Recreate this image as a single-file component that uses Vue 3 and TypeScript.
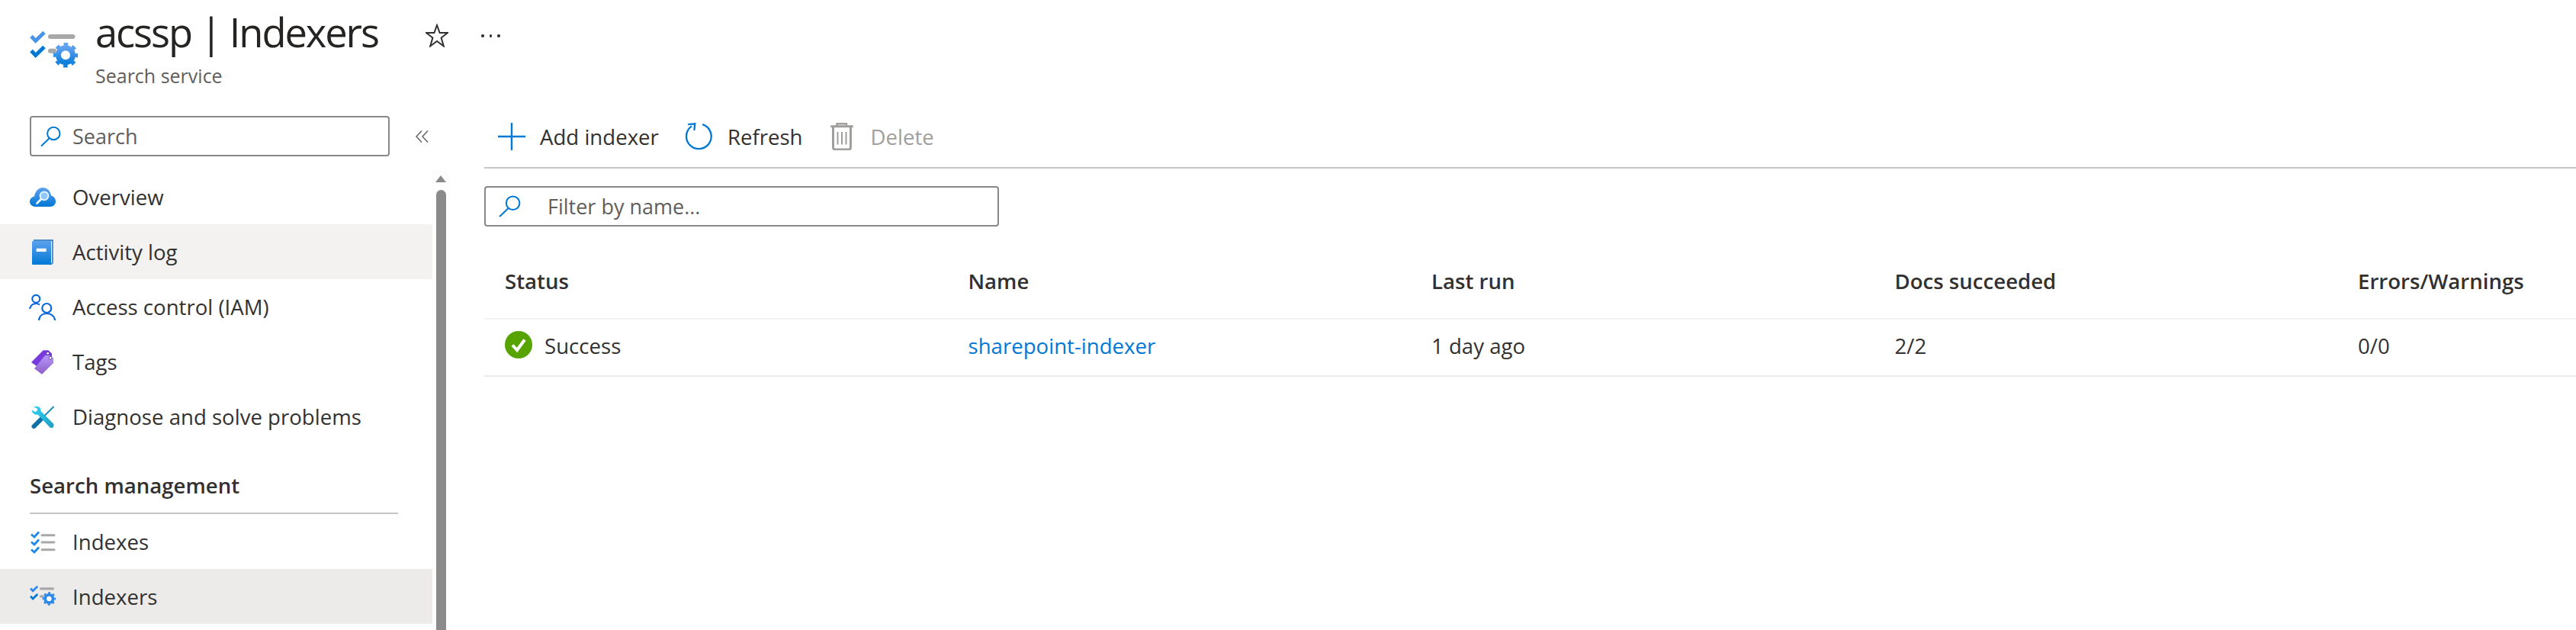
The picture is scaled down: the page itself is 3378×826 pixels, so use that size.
<script setup lang="ts">
interface Row { key: string; label: string; tone?: string }
const top: Row[] = [
  { key: 'overview', label: 'Overview' },
  { key: 'log', label: 'Activity log', tone: 'hover' },
  { key: 'iam', label: 'Access control (IAM)' },
  { key: 'tags', label: 'Tags' },
  { key: 'diag', label: 'Diagnose and solve problems' },
]
const bottom: Row[] = [
  { key: 'indexes', label: 'Indexes' },
  { key: 'indexers', label: 'Indexers', tone: 'active' },
]
const columns = ['Status', 'Name', 'Last run', 'Docs succeeded', 'Errors/Warnings']
</script>

<template>
  <div class="page">
    <header class="head">
      <svg class="head-icon" viewBox="0 0 63 49">
        <defs>
          <linearGradient id="gearA" x1="0" y1="0" x2="0" y2="1"><stop offset="0" stop-color="#5ea0ef" /><stop offset="1" stop-color="#0f7fdc" /></linearGradient>
        </defs>
        <polyline points="2,7.5 7.7,13.5 19,2.5" fill="none" stroke="#4a94e8" stroke-width="5" />
        <polyline points="2,26.5 7.7,32.5 19,21.5" fill="none" stroke="#0078d4" stroke-width="5" />
        <line x1="27" y1="8" x2="56.500" y2="8" stroke="#a8a8a8" stroke-width="6" stroke-linecap="round" />
        <line x1="27" y1="26.700" x2="32" y2="26.700" stroke="#a8a8a8" stroke-width="6" stroke-linecap="round" />
        <circle cx="47" cy="32.300" r="9.500" fill="#fff" stroke="url(#gearA)" stroke-width="7" />
        <circle cx="47" cy="32.300" r="14.500" fill="none" stroke="url(#gearA)" stroke-width="3.500" stroke-dasharray="5.700 5.690" stroke-dashoffset="2.850" />
      </svg>
      <div class="head-text">
        <h1 class="title">acssp | Indexers</h1>
        <div class="subtitle">Search service</div>
      </div>
      <svg class="star" viewBox="0 0 30 31"><polygon points="15,2 18.600,12 29,12 20.600,18.500 23.800,29.500 15,23 6.200,29.500 9.400,18.500 1,12 11.400,12" fill="none" stroke="#323130" stroke-width="2" /></svg>
      <div class="dots"><i></i><i></i><i></i></div>
    </header>

    <div class="body">
      <aside class="side">
        <div class="side-search">
          <div class="field side-field">
            <svg class="lens" viewBox="0 0 27 26"><circle cx="17.300" cy="9" r="8.200" fill="none" stroke="#0078d4" stroke-width="2" /><line x1="11.500" y1="15.500" x2="1" y2="25.500" stroke="#0078d4" stroke-width="2" /></svg>
            <span class="ph">Search</span>
          </div>
          <svg class="collapse" viewBox="0 0 17 16"><polyline points="8,0.500 1,8 8,15.500" fill="none" stroke="#605e5c" stroke-width="1.400" /><polyline points="16,0.500 9,8 16,15.500" fill="none" stroke="#605e5c" stroke-width="1.400" /></svg>
        </div>
        <div class="side-scroll">
          <nav class="menu">
            <a v-for="r in top" :key="r.key" class="row" :class="r.tone">
              <svg class="ico" viewBox="0 0 36 36">
                <defs>
                  <linearGradient id="blueV" x1="0" y1="0" x2="0" y2="1"><stop offset="0" stop-color="#5ea0ef" /><stop offset="1" stop-color="#0078d4" /></linearGradient>
                  <linearGradient id="tagV" x1="0" y1="0" x2="0" y2="1"><stop offset="0" stop-color="#b796f9" /><stop offset="1" stop-color="#8c5fc9" /></linearGradient>
                  <linearGradient id="wrenchG" gradientUnits="userSpaceOnUse" x1="4" y1="5" x2="32" y2="33"><stop offset="0" stop-color="#32d4f5" /><stop offset="1" stop-color="#1d9ec4" /></linearGradient>
                </defs>
                <g v-if="r.key === 'overview'">
                  <path d="M8.500 31 C4 31 1 28 1 24.500 C1 20.500 4 18 7 17.500 C8 11 12.500 6 18 6 C24 6 28 10.500 29 16.500 C33 17.500 35 20.500 35 24.500 C35 28 32 31 28 31 Z" fill="url(#blueV)" />
                  <circle cx="20" cy="16.800" r="5.400" fill="#8fc8f8" stroke="#dff2fe" stroke-width="2" />
                  <line x1="16" y1="21" x2="10.500" y2="26.500" stroke="#f4fbff" stroke-width="2.800" stroke-linecap="round" />
                </g>
                <g v-else-if="r.key === 'log'">
                  <rect x="4" y="4" width="25" height="31" rx="1" fill="url(#blueV)" />
                  <polyline points="6,3 31,3 31,33 28,35" fill="none" stroke="#0f6cbd" stroke-width="1.400" />
                  <rect x="9.700" y="13.700" width="13" height="4.300" fill="#f3f9fe" />
                </g>
                <g v-else-if="r.key === 'iam'" fill="none" stroke="#0a67dc" stroke-width="2.200">
                  <circle cx="9.300" cy="7.800" r="5" />
                  <path d="M1 21 C2 16.500 5.500 14 9.300 14 C11 14 12.500 14.500 14 15.500" />
                  <circle cx="23.300" cy="20" r="6" />
                  <path d="M13 36 C13.500 30 18 27 23.300 27 C28.500 27 33.500 30 34 36" />
                </g>
                <g v-else-if="r.key === 'tags'">
                  <path d="M3 19 L18.700 3.300 L25.300 3.300 L30 7.500 L30 12 L10 24 Z" fill="#773adc" />
                  <path d="M7 27.300 L21 10 L27 10 L32 13.300 L32 20 L17 34.700 Z" fill="url(#tagV)" />
                  <circle cx="24.700" cy="7.300" r="1.900" fill="#fff" stroke="#4a2a8a" stroke-width="0.800" />
                  <circle cx="28" cy="13.300" r="1.900" fill="#fff" stroke="#4a2a8a" stroke-width="0.800" />
                </g>
                <g v-else>
                  <line x1="32.500" y1="5" x2="19" y2="18.500" stroke="#1d8bb5" stroke-width="2" />
                  <line x1="17" y1="20.500" x2="6.500" y2="31" stroke="#0f6fa8" stroke-width="6" stroke-linecap="round" />
                  <path d="M10 4.700 C13.500 4.600 16 7.500 15.500 11 L32.500 28 L32 32.500 L28 33 L11.500 15.600 C8 16.500 4 14 3.700 9.500 L8 12 L11 10.500 L10.500 7.500 L6 5.500 C7 5 8.500 4.700 10 4.700 Z" fill="url(#wrenchG)" />
                </g>
              </svg>
              <span>{{ r.label }}</span>
            </a>
            <div class="section"><span>Search management</span></div>
            <a v-for="r in bottom" :key="r.key" class="row" :class="r.tone">
              <svg v-if="r.key === 'indexes'" class="ico" viewBox="0 0 36 36">
                <g fill="none" stroke="#2088e8" stroke-width="2.800">
                  <polyline points="3,8.500 7,12 13,5.500" />
                  <polyline points="3,18.500 7,22 13,15.500" />
                  <polyline points="3,28.500 7,32 13,25.500" />
                </g>
                <g stroke="#a8a8a8" stroke-width="3" stroke-linecap="round">
                  <line x1="17" y1="9.700" x2="33" y2="9.700" />
                  <line x1="17" y1="19" x2="33" y2="19" />
                  <line x1="17" y1="28.700" x2="33" y2="28.700" />
                </g>
              </svg>
              <svg v-else class="ico" viewBox="-1.800 -6.400 66.600 66.600">
                <polyline points="2,7.5 7.7,13.5 19,2.5" fill="none" stroke="#2e88ea" stroke-width="5" />
                <polyline points="2,26.5 7.7,32.5 19,21.5" fill="none" stroke="#0078d4" stroke-width="5" />
                <line x1="27" y1="8" x2="56.500" y2="8" stroke="#a8a8a8" stroke-width="6" stroke-linecap="round" />
                <line x1="27" y1="26.700" x2="32" y2="26.700" stroke="#a8a8a8" stroke-width="6" stroke-linecap="round" />
                <circle cx="47" cy="32.300" r="9.500" fill="#fff" stroke="#2b88e8" stroke-width="7" />
                <circle cx="47" cy="32.300" r="14.500" fill="none" stroke="#2b88e8" stroke-width="3.500" stroke-dasharray="5.700 5.690" stroke-dashoffset="2.850" />
              </svg>
              <span>{{ r.label }}</span>
            </a>
          </nav>
          <div class="track">
            <svg class="arrow" viewBox="0 0 14 9"><polygon points="7,0 14,9 0,9" fill="#8a8a8a" /></svg>
            <div class="thumb"></div>
          </div>
        </div>
      </aside>

      <main class="main">
        <div class="toolbar">
          <button class="tool add">
            <svg class="t-plus" viewBox="0 0 36 36"><path d="M18 0 V36 M0 18 H36" stroke="#0078d4" stroke-width="2.400" fill="none" /></svg>
            <span>Add indexer</span>
          </button>
          <button class="tool refresh">
            <svg class="t-plus" viewBox="0 0 37 36"><path d="M23.700 1.700 A16.800 16.800 0 1 1 9.300 4" fill="none" stroke="#0078d4" stroke-width="2.400" /><polyline points="4.300,1.700 13.700,0.900 12.700,9.700" fill="none" stroke="#0078d4" stroke-width="2.400" /></svg>
            <span>Refresh</span>
          </button>
          <button class="tool off">
            <svg class="t-trash" viewBox="0 0 30 36">
              <g fill="none" stroke="#a19f9d" stroke-width="2.400">
                <path d="M0.300 4.700 H29.700" stroke-width="3" />
                <path d="M8.500 4.700 V1.200 H21 V4.700" />
                <path d="M3.500 5 V32 Q3.500 35 6.500 35 H23.500 Q26.500 35 26.500 32 V5" stroke-width="3" />
                <path d="M9.500 12 V28.500 M15 12 V28.500 M20.500 12 V28.500" stroke-width="2" />
              </g>
            </svg>
            <span>Delete</span>
          </button>
        </div>
        <div class="field filter">
          <svg class="lens2" viewBox="0 0 27 26"><circle cx="17.300" cy="9" r="8.200" fill="none" stroke="#0078d4" stroke-width="1.900" /><line x1="11.500" y1="15.500" x2="1" y2="25.500" stroke="#0078d4" stroke-width="1.900" /></svg>
          <span class="ph">Filter by name...</span>
        </div>
        <div class="grid ghead">
          <div v-for="c in columns" :key="c" class="cell">{{ c }}</div>
        </div>
        <div class="grid gbody">
          <div class="cell status">
            <svg class="ok" viewBox="0 0 36 36"><circle cx="18" cy="18" r="18" fill="#57a300" /><polyline points="10,18.500 16,25 26,11.500" fill="none" stroke="#fff" stroke-width="4" /></svg>
            <span>Success</span>
          </div>
          <div class="cell"><a class="link">sharepoint-indexer</a></div>
          <div class="cell">1 day ago</div>
          <div class="cell">2/2</div>
          <div class="cell">0/0</div>
        </div>
      </main>
    </div>
  </div>
</template>

<style>
html, body { margin: 0; background: #fff; }
</style>

<style scoped>
.page {
  width: 3378px;
  height: 826px;
  overflow: hidden;
  background: #fff;
  color: #323130;
  font-family: "Open Sans", "Noto Sans", sans-serif;
  font-size: 27.600px;
  display: flex;
  flex-direction: column;
}
.head {
  height: 130px;
  flex: none;
  display: flex;
  align-items: flex-start;
  padding-left: 39px;
  box-sizing: border-box;
}
.head-icon { width: 63px; height: 49px; margin-top: 40px; flex: none; }
.head-text { margin-left: 23px; width: 433px; flex: none; }
.title {
  margin: 5px 0 0;
  font-size: 52.500px;
  line-height: 73px;
  font-weight: 400;
  letter-spacing: -2.100px;
  white-space: nowrap;
  color: #252423;
}
.subtitle { font-size: 25px; line-height: 34px; color: #605e5c; margin-top: 4px; }
.star { width: 30px; height: 31px; margin-top: 31px; flex: none; }
.dots { display: flex; gap: 7px; margin: 45px 0 0 43px; }
.dots i { width: 3.500px; height: 3.500px; border-radius: 50%; background: #323130; display: block; }
.body { flex: 1; display: flex; min-height: 0; }
.side { width: 589px; flex: none; padding-top: 22px; box-sizing: border-box; display: flex; flex-direction: column; }
.side-search { display: flex; align-items: center; padding-left: 39px; }
.field {
  height: 53px;
  box-sizing: border-box;
  border: 2px solid #8a8886;
  border-radius: 4px;
  display: flex;
  align-items: center;
  background: #fff;
}
.side-field { width: 472px; padding-left: 12px; }
.lens { width: 27px; height: 26px; margin-right: 15px; flex: none; }
.ph { color: #605e5c; font-size: 27px; white-space: nowrap; }
.collapse { width: 17px; height: 16px; margin-left: 34px; }
.side-scroll { flex: 1; display: flex; margin-top: 17px; min-height: 0; }
.menu { width: 567px; flex: none; }
.row { height: 72px; display: flex; align-items: center; padding-left: 38px; box-sizing: border-box; white-space: nowrap; }
.row.hover { background: #f3f2f1; }
.row.active { background: #edebe9; }
.ico { width: 36px; height: 36px; margin-right: 21px; flex: none; }
.section { height: 92px; margin-left: 39px; margin-right: 45px; box-sizing: border-box; border-bottom: 2px solid #c8c6c4; display: flex; align-items: flex-end; padding-bottom: 17px; font-weight: 600; }
.track { width: 22px; background: #fdfdfd; display: flex; flex-direction: column; align-items: center; padding-top: 8px; box-sizing: border-box; }
.arrow { width: 14px; height: 9px; flex: none; }
.thumb { width: 13px; flex: 1; margin-top: 10px; background: #8a8a8a; border-radius: 7px 7px 0 0; }
.main { flex: 1; min-width: 0; margin-left: 46px; display: flex; flex-direction: column; }
.toolbar { height: 91px; flex: none; box-sizing: border-box; border-bottom: 2px solid #c8c6c4; display: flex; align-items: flex-start; padding: 31px 0 0 18px; }
.tool { background: none; border: 0; padding: 0; margin: 0 36px 0 0; display: flex; align-items: center; height: 36px; font: inherit; color: inherit; cursor: pointer; }
.tool.add { margin-right: 34px; }
.tool.refresh .t-plus { margin-right: 20px; }
.tool.off { color: #a19f9d; }
.t-plus { width: 36px; height: 36px; margin-right: 19px; flex: none; }
.t-trash { width: 30px; height: 36px; margin-right: 23px; flex: none; }
.filter { width: 675px; margin-top: 23px; padding-left: 17px; flex: none; }
.lens2 { width: 29px; height: 29px; margin-right: 35px; flex: none; }
.grid { display: grid; grid-template-columns: repeat(5, 607.500px); flex: none; }
.ghead { height: 122px; box-sizing: border-box; border-bottom: 2px solid #f3f2f1; align-items: center; padding-top: 22px; font-weight: 600; }
.gbody { height: 75px; padding-bottom: 5px; box-sizing: border-box; border-bottom: 2px solid #edebe9; align-items: center; }
.cell { padding-left: 27px; white-space: nowrap; }
.status { display: flex; align-items: center; }
.ok { width: 36px; height: 36px; margin: 0 16px 3px 0; flex: none; }
.link { color: #0078d4; }
</style>
